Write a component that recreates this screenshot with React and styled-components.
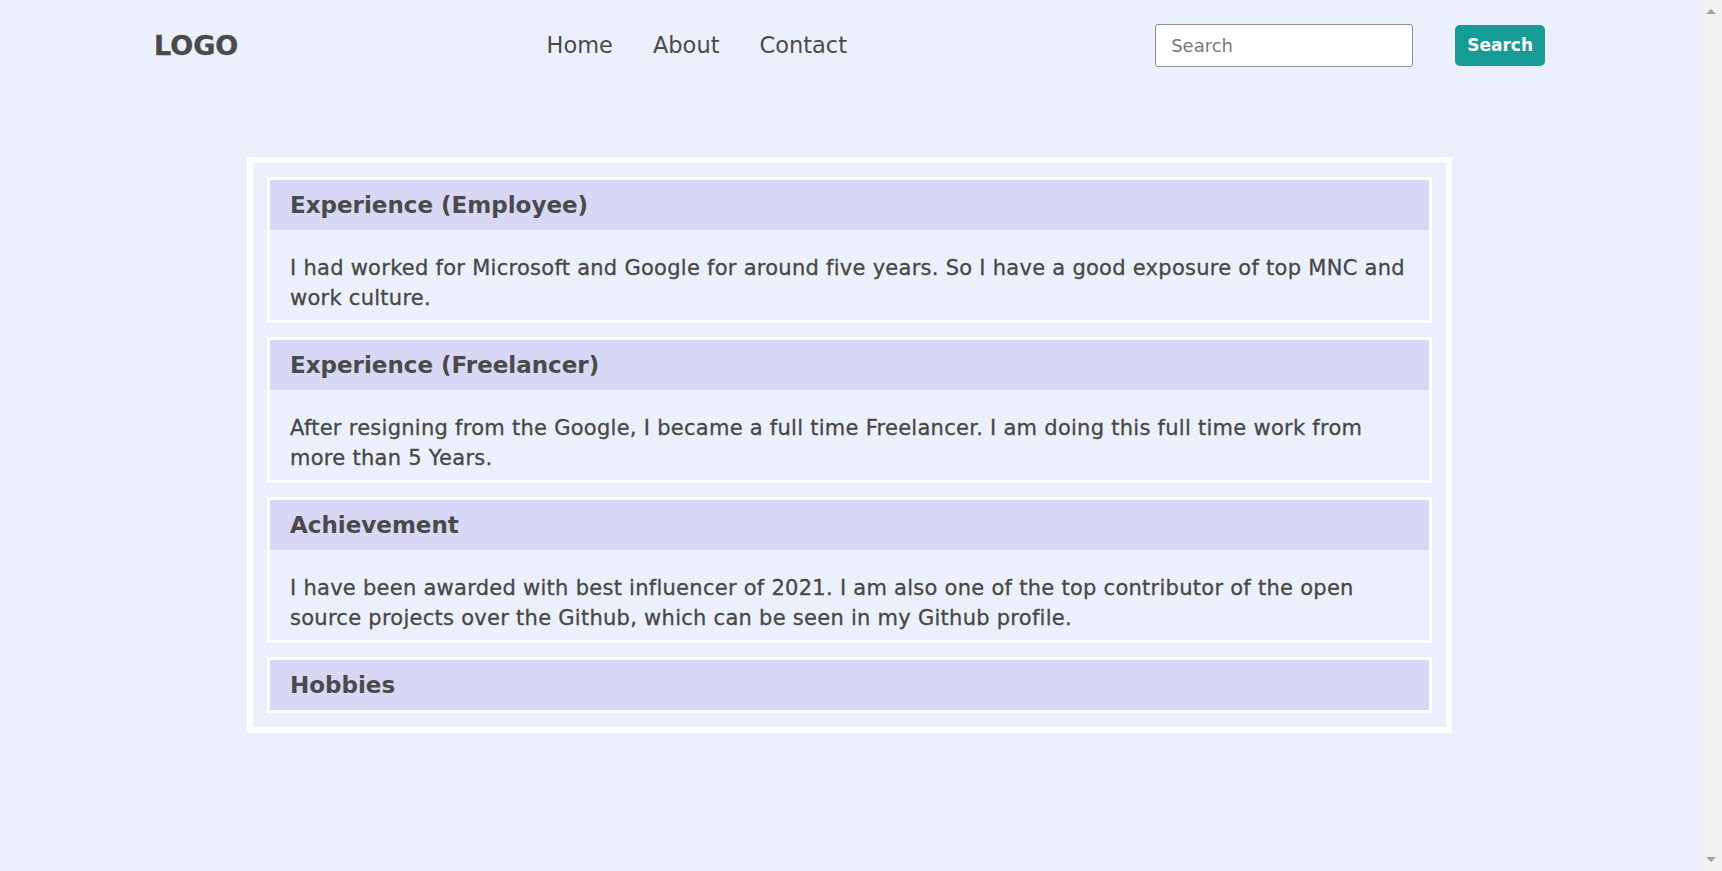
import styled, { createGlobalStyle } from "styled-components";

const GlobalStyle = createGlobalStyle`
  body {
    margin: 0;
    background: #ecf0fd;
    color: #4a4a4a;
    font-family: "DejaVu Sans", "Open Sans", sans-serif;
  }
`;

const Shell = styled.div`
  display: flex;
  height: 100vh;
  overflow: hidden;
`;

const Page = styled.div`
  flex: 1;
  min-width: 0;
  background: #ecf0fd;
`;

const Scrollbar = styled.div`
  width: 23px;
  flex-shrink: 0;
  background: #f1f1f1;
  display: flex;
  flex-direction: column;
  justify-content: space-between;
  align-items: center;
  padding: 9px 0;
  box-sizing: border-box;
`;

const Arrow = styled.span`
  width: 0;
  height: 0;
  border-left: 5px solid transparent;
  border-right: 5px solid transparent;
  ${({ $down }) =>
    $down ? "border-top: 5px solid #a3a3a3;" : "border-bottom: 5px solid #a3a3a3;"}
`;

const Header = styled.header`
  height: 90px;
  display: flex;
  align-items: center;
  justify-content: space-between;
  padding: 0 154px;
`;

const Logo = styled.div`
  font-size: 27px;
  font-weight: bold;
  color: #4a4a4a;
  -webkit-text-stroke: 0.4px #4a4a4a;
`;

const Nav = styled.nav`
  display: flex;
  gap: 40px;
`;

const NavLink = styled.a`
  font-size: 22.5px;
  color: #4a4a4a;
  text-decoration: none;
  cursor: pointer;
`;

const SearchForm = styled.form`
  display: flex;
  align-items: center;
  gap: 42px;
`;

const SearchInput = styled.input`
  box-sizing: border-box;
  width: 258px;
  height: 43px;
  padding: 0 15px;
  border: 1px solid #8c8c8c;
  border-radius: 3px;
  background: #fff;
  font-family: inherit;
  font-size: 18px;
  color: #4a4a4a;
  outline: none;

  &::placeholder {
    color: #7a7a7a;
  }
`;

const SearchButton = styled.button`
  height: 41px;
  padding: 0 12px;
  border: none;
  border-radius: 5px;
  background: #179c95;
  color: #fff;
  font-family: inherit;
  font-size: 17px;
  font-weight: bold;
  cursor: pointer;
`;

const Card = styled.main`
  width: 1165px;
  margin: 67px auto 0;
  padding: 14px;
  border: 6px solid #fff;
  display: flex;
  flex-direction: column;
  gap: 14px;
`;

const Section = styled.section`
  border: 3px solid #fff;
`;

const SectionTitle = styled.h2`
  margin: 0;
  padding: 0 20px;
  line-height: 50px;
  background: #d9d7f6;
  font-size: 23px;
  font-weight: bold;
  color: #4a4a4a;
`;

const SectionText = styled.p`
  margin: 0;
  padding: 23px 20px 7px;
  font-size: 21px;
  letter-spacing: 0.27px;
  line-height: 30px;
  color: #474747;
  -webkit-text-stroke: 0.3px #474747;
`;

const sections = [
  {
    title: "Experience (Employee)",
    text: "I had worked for Microsoft and Google for around five years. So I have a good exposure of top MNC and work culture.",
  },
  {
    title: "Experience (Freelancer)",
    text: "After resigning from the Google, I became a full time Freelancer. I am doing this full time work from more than 5 Years.",
  },
  {
    title: "Achievement",
    text: "I have been awarded with best influencer of 2021. I am also one of the top contributor of the open source projects over the Github, which can be seen in my Github profile.",
  },
  { title: "Hobbies" },
];

export default function App() {
  return (
    <Shell>
      <GlobalStyle />
      <Page>
        <Header>
          <Logo>LOGO</Logo>
          <Nav>
            <NavLink>Home</NavLink>
            <NavLink>About</NavLink>
            <NavLink>Contact</NavLink>
          </Nav>
          <SearchForm onSubmit={(e) => e.preventDefault()}>
            <SearchInput type="text" placeholder="Search" />
            <SearchButton type="submit">Search</SearchButton>
          </SearchForm>
        </Header>
        <Card>
          {sections.map((s) => (
            <Section key={s.title}>
              <SectionTitle>{s.title}</SectionTitle>
              {s.text && <SectionText>{s.text}</SectionText>}
            </Section>
          ))}
        </Card>
      </Page>
      <Scrollbar>
        <Arrow />
        <Arrow $down />
      </Scrollbar>
    </Shell>
  );
}
